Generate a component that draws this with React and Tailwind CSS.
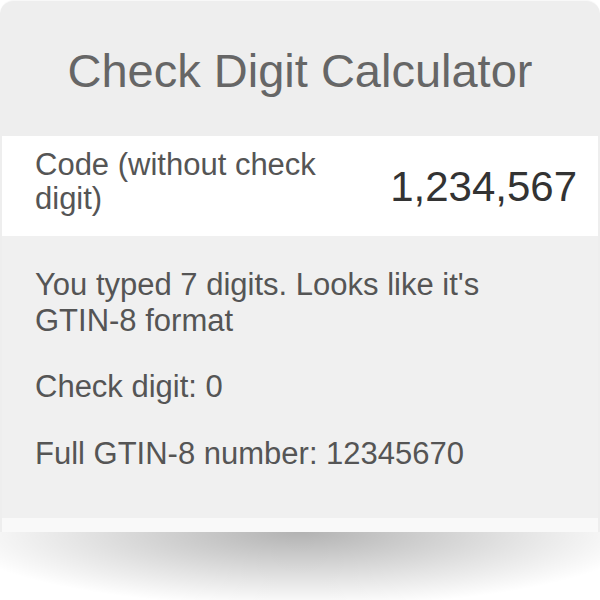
export default function App() {
  const font = { fontFamily: '"Liberation Sans", Arial, sans-serif' };
  return (
    <div className="w-[600px] h-[600px] bg-white overflow-hidden" style={font}>
      <div className="rounded-t-[14px] bg-[#eeeeee] px-[2px] border-t border-white/60">
        <header className="h-[135px] pt-[46px] text-center text-[47px] leading-[47px] text-[#666666]">
          Check Digit Calculator
        </header>
        <div className="h-[100px] bg-white flex items-start justify-between pl-[33px] pr-[21px]">
          <div className="mt-[12px] w-[300px] text-[31px] leading-[34px] text-[#555555]">
            Code (without check digit)
          </div>
          <div className="mt-[30px] text-[42px] leading-[42px] text-[#333333]">1,234,567</div>
        </div>
        <div className="bg-[#f0f0f0] pt-[31px] pb-[46px] pl-[33px] pr-[33px] text-[31px] leading-[36px] text-[#555555]">
          <p>You typed 7 digits. Looks like it's GTIN-8 format</p>
          <p className="mt-[30px]">Check digit: 0</p>
          <p className="mt-[31px]">Full GTIN-8 number: 12345670</p>
        </div>
        <div className="h-[14px] bg-[#f9f9f9]" />
      </div>
      <div className="h-[68px] bg-[radial-gradient(ellipse_58%_110%_at_50%_0%,rgba(0,0,0,0.3),rgba(0,0,0,0.1)_65%,rgba(0,0,0,0)_100%)]" />
    </div>
  );
}
